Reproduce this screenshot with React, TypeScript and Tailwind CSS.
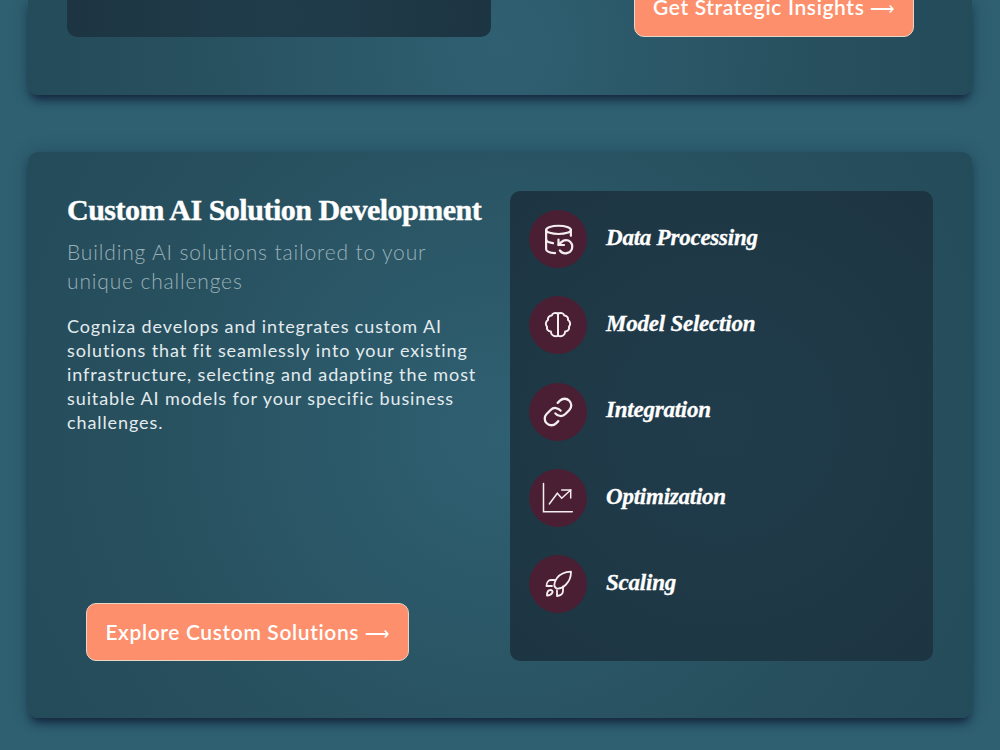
import React from "react";
import { DatabaseBackup, Link } from "lucide-react";

const cardBg = "bg-[radial-gradient(circle_at_center,#2f6072_0%,#274f5d_70%,#244b59_100%)]";
const panelBg = "bg-[radial-gradient(circle_at_center,#203c4b_0%,#1d3542_100%)]";
const sans = "font-['Lato','Open_Sans',sans-serif]";
const serif = "font-['Liberation_Serif',serif]";
const cardShadow = "shadow-[0_7px_10px_-3px_rgba(15,25,50,0.85),0_0_16px_rgba(25,45,65,0.35)]";

function BrainIcon() {
  return (
    <svg width="30" height="30" viewBox="0 0 24 24" fill="none" stroke="currentColor" strokeWidth="1.6" strokeLinecap="round" strokeLinejoin="round">
      <path d="M12 2.8C10 1.9 7.6 2.4 7 4.4C5 4.4 3.6 6 4 8C2.2 9 1.6 11.8 3.2 13.4C2.7 15.6 4.3 17.2 6.3 17.2C6.4 19.4 8 21 10 21C11 21 12 20.6 12 20" />
      <path d="M12 2.8C14 1.9 16.4 2.4 17 4.4C19 4.4 20.4 6 20 8C21.8 9 22.4 11.8 20.8 13.4C21.3 15.6 19.7 17.2 17.7 17.2C17.6 19.4 16 21 14 21C13 21 12 20.6 12 20" />
      <path d="M12 2.8V20" />
    </svg>
  );
}

function GrowthIcon() {
  return (
    <svg width="36" height="36" viewBox="0 0 36 36" fill="none" stroke="currentColor" strokeWidth="1.5" strokeLinecap="round" strokeLinejoin="miter">
      <path d="M3.5 3.5V31.7H32.3" />
      <path d="M9.3 24L17.3 13.3L21.7 18.3L30.7 10" />
      <path d="M21.7 10H30.7V18" />
    </svg>
  );
}

function RocketIcon() {
  return (
    <svg width="36" height="36" viewBox="0 0 36 36" fill="none" stroke="currentColor" strokeWidth="1.8" strokeLinecap="round" strokeLinejoin="round">
      <path d="M31 5.7C25 6 20 8 17 12C15 15 14 18 14.5 20.5L16.5 22.5C19.5 23 23 21.5 26 18.5C29.5 15 31 10 31 5.7Z" />
      <path d="M14.5 14H11C8.5 14 6.5 16.5 6.5 20H12" />
      <path d="M23 20.5V25C23 27.5 20.5 29.5 17 30V24.5" />
      <path d="M7 29.5C7 26 8.5 24 10.5 24C12 24 13 25.5 12.5 26.5C11.5 28.5 9 29.5 7 29.5Z" />
    </svg>
  );
}

const items: { label: string; icon: React.ReactNode }[] = [
  { label: "Data Processing", icon: <DatabaseBackup size={33} strokeWidth={1.6} /> },
  { label: "Model Selection", icon: <BrainIcon /> },
  { label: "Integration", icon: <Link size={32} strokeWidth={1.7} /> },
  { label: "Optimization", icon: <GrowthIcon /> },
  { label: "Scaling", icon: <RocketIcon /> },
];

function Btn({ label, className }: { label: string; className?: string }) {
  return (
    <button className={`h-[58px] rounded-[10px] border border-[#e6d5c8] bg-[#fd8f6c] text-[21px] font-semibold tracking-[0.03em] text-white ${sans} ${className ?? ""}`}>
      {label} <span className="text-[17px] font-normal">⟶</span>
    </button>
  );
}

export default function App() {
  return (
    <div className="h-[750px] overflow-hidden bg-[#2e6071] px-[28px]">
      <div className={`mt-[-1px] flex h-[96px] rounded-b-[10px] px-[39px] ${cardShadow} ${cardBg}`}>
        <div className={`h-[38px] w-[424px] rounded-b-[10px] ${panelBg}`} />
        <Btn className="ml-[143px] mt-[-20px] w-[280px] leading-[38px]" label="Get Strategic Insights" />
      </div>

      <div className={`mt-[57px] grid h-[566px] grid-cols-[424px_423px] gap-x-[19px] rounded-[10px] px-[39px] pb-[57px] pt-[39px] ${cardShadow} ${cardBg}`}>
        <div className="flex flex-col">
          <h2 className={`text-[30px] font-bold leading-[38px] tracking-[-0.5px] text-white [-webkit-text-stroke:0.4px_white] ${serif}`}>
            Custom AI Solution Development
          </h2>
          <p className={`mt-[8px] text-[21px] font-light leading-[29px] tracking-[0.04em] text-[#9ab0b8] ${sans}`}>
            Building AI solutions tailored to your unique challenges
          </p>
          <p className={`mt-[19px] text-[18px] leading-[24px] tracking-[0.9px] text-[#e3ebee] ${sans}`}>
            Cogniza develops and integrates custom AI solutions that fit seamlessly into your existing infrastructure, selecting and adapting the most suitable AI models for your specific business challenges.
          </p>
          <Btn className="ml-[19px] mt-auto w-[323px]" label="Explore Custom Solutions" />
        </div>
        <div className={`flex flex-col gap-[28.3px] rounded-[10px] p-[19px] ${panelBg}`}>
          {items.map(({ label, icon }) => (
            <div key={label} className="flex items-center gap-[19px]">
              <span className="flex h-[58px] w-[58px] shrink-0 items-center justify-center rounded-full bg-[#4a1f33] text-[#f5eef0]">
                {icon}
              </span>
              <span className={`mt-[-2px] text-[23px] font-bold italic tracking-[-0.01em] text-white [-webkit-text-stroke:0.3px_white] ${serif}`}>{label}</span>
            </div>
          ))}
        </div>
      </div>
    </div>
  );
}
